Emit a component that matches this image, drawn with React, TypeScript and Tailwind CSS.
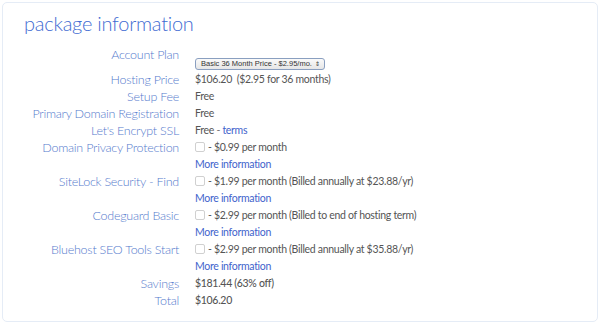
import React from "react";

const Check = () => (
  <span className="inline-block w-[10px] h-[10px] border border-[#d0d0d0] rounded-[2px] bg-white mr-[3px] align-[-1px]" />
);

const More = () => (
  <>
    <div />
    <div className="text-[10.5px] tracking-[-0.3px] text-[#3f63cc]">More information</div>
  </>
);

export default function App() {
  const label = "text-right text-[#557bcd] text-[12.5px] font-light tracking-[-0.25px] pr-[16px]";
  const val = "text-[10.5px] tracking-[-0.3px] text-[#555]";
  return (
    <div className="w-[600px] h-[326px] bg-white p-[2px] font-['Lato',sans-serif]">
      <div className="h-[320px] border border-[#e5ecf6] rounded-[5px]">
        <div className="pl-[21px] pt-[5px] text-[20px] font-light tracking-[-0.25px] leading-[30px] text-[#3f6bd2]">package information</div>
        <div className="grid grid-cols-[192px_1fr] leading-[17px] mt-[8px] items-center">
          <div className={`${label} self-start`}>Account Plan</div>
          <div className="h-[25px] flex items-end pb-[1px]">
            <div className="h-[12px] w-[130px] border border-[#8a9fc0] rounded-[3px] bg-gradient-to-b from-[#fafafa] to-[#e6e6e6] flex items-center pl-[5px] pr-[4px] text-[7.5px] leading-[10px] text-[#333] font-['Liberation_Sans',sans-serif] justify-between">
              <span>Basic 36 Month Price - $2.95/mo.</span>
              <span className="text-[6px]">⇕</span>
            </div>
          </div>
          <div className={label}>Hosting Price</div>
          <div className={val}>$106.20&nbsp; ($2.95 for 36 months)</div>
          <div className={label}>Setup Fee</div>
          <div className={`${val} text-[#333]`}>Free</div>
          <div className={label}>Primary Domain Registration</div>
          <div className={`${val} text-[#333]`}>Free</div>
          <div className={label}>Let's Encrypt SSL</div>
          <div className={`${val} text-[#333]`}>Free <span className="text-[#777]">-</span> <span className="text-[#3f63cc]">terms</span></div>
          <div className={label}>Domain Privacy Protection</div>
          <div className={val}><Check />- $0.99 per month</div>
          <More />
          <div className={label}>SiteLock Security - Find</div>
          <div className={val}><Check />- $1.99 per month (Billed annually at $23.88/yr)</div>
          <More />
          <div className={label}>Codeguard Basic</div>
          <div className={val}><Check />- $2.99 per month (Billed to end of hosting term)</div>
          <More />
          <div className={label}>Bluehost SEO Tools Start</div>
          <div className={val}><Check />- $2.99 per month (Billed annually at $35.88/yr)</div>
          <More />
          <div className={label}>Savings</div>
          <div className={`${val} text-[#333] font-medium`}>$181.44 (63% off)</div>
          <div className={label}>Total</div>
          <div className={`${val} text-[#333] font-medium`}>$106.20</div>
        </div>
      </div>
    </div>
  );
}
